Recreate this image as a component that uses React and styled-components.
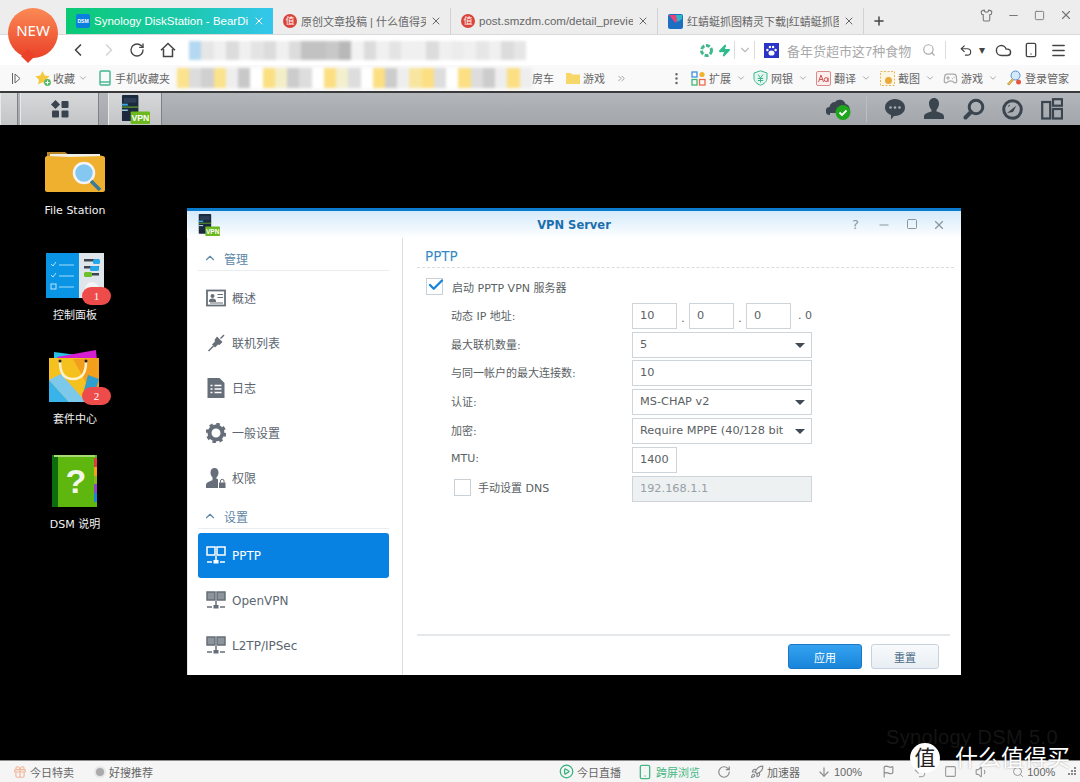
import React from "react";
import styled, { createGlobalStyle } from "styled-components";
import {
  ChevronLeft, ChevronRight, ChevronDown, RotateCw, Search, Undo2, Cloud, Smartphone, Menu, Zap,
  Plus, X, Minus, Square, Shirt, ChevronsRight, Gift, Rocket, ArrowDown, Flag, Volume1,
  Check, PlayCircle, MoreVertical, Gamepad2, ChevronUp,
} from "lucide-react";

const chromeFont = `"Liberation Sans", "Noto Sans CJK SC", sans-serif`;
const dsmFont = `"DejaVu Sans", "Noto Sans CJK SC", sans-serif`;

const Global = createGlobalStyle`
  html, body { margin: 0; padding: 0; background: #000; }
  * { box-sizing: border-box; }
`;

const Page = styled.div`
  position: relative;
  width: 1080px;
  height: 782px;
  overflow: hidden;
  display: flex;
  flex-direction: column;
  font-family: ${chromeFont};
  font-size: 12px;
`;

/* ---- browser chrome ---- */
const TabStrip = styled.div`
  height: 35px;
  flex: none;
  padding: 8px 0 0 66px;
  background: #ededed;
  border-bottom: 1px solid #d9d9d9;
  display: flex;
  align-items: stretch;
  color: #666;
`;
const Tab = styled.div`
  width: ${(p) => p.$w}px;
  display: flex;
  align-items: center;
  gap: 4px;
  padding: 0 8px 0 10px;
  color: ${(p) => (p.$active ? "#fff" : "#666")};
  background: ${(p) => (p.$active ? "linear-gradient(90deg, #0ac974, #1dc9b0 60%, #34c6ee)" : "none")};
  border-right: ${(p) => (p.$active ? "none" : "1px solid #d2d2d2")};
`;
const TabTitle = styled.span`
  flex: 1;
  overflow: hidden;
  white-space: nowrap;
  font-size: ${(p) => p.$fs || 11.5}px;
`;
const DsmFavicon = styled.span`
  width: 14px;
  height: 14px;
  flex: none;
  border-radius: 2px;
  background: #0a7fe0;
  color: #fff;
  font: bold 5px/14px "Liberation Sans", sans-serif;
  text-align: center;
`;
const RedSeal = styled.span`
  width: 14px;
  height: 14px;
  flex: none;
  border-radius: 50%;
  background: #d9433a;
  color: #fff;
  font-size: 9px;
  line-height: 14px;
  text-align: center;
`;
const NewTab = styled.div`
  width: 30px;
  display: flex;
  align-items: center;
  justify-content: center;
  color: #444;
`;
const WinButtons = styled.div`
  margin-left: auto;
  margin-top: -4px;
  height: 22px;
  padding-right: 7px;
  display: flex;
  align-items: center;
  gap: 14px;
  color: #777;
`;
const NewBadge = styled.div`
  position: absolute;
  left: 8px;
  top: 8px;
  width: 50px;
  height: 50px;
  border-radius: 50%;
  background: linear-gradient(180deg, #fb8a55, #ea4128);
  color: #fff;
  font: 15px/44px "Noto Sans", sans-serif;
  text-align: center;
  z-index: 3;
  &::after {
    content: "";
    position: absolute;
    left: 15px;
    bottom: -3px;
    width: 10px;
    height: 10px;
    background: #ea4128;
    transform: rotate(45deg);
    z-index: -1;
  }
`;
const NavRow = styled.div`
  height: 30px;
  flex: none;
  background: #fff;
  display: flex;
  align-items: center;
  padding-left: 64px;
  color: #444;
`;
const Slot = styled.span`
  width: ${(p) => p.$w}px;
  flex: none;
  display: flex;
  align-items: center;
  justify-content: center;
  color: ${(p) => p.$c || "inherit"};
`;
const Sep = styled.span`
  width: 1px;
  height: 18px;
  flex: none;
  background: #dcdcdc;
`;
const BlurStrip = styled.div`
  display: flex;
  flex: none;
  width: ${(p) => p.$w}px;
  height: ${(p) => p.$h}px;
  margin-left: ${(p) => p.$ml}px;
  filter: blur(1.6px);
`;
const BlurCell = styled.span`
  flex: 1;
  background: ${(p) => p.$c};
`;
const BaiduLogo = styled.span`
  width: 15px;
  height: 15px;
  flex: none;
  border: 1px solid #2a35c8;
  background: #2a35c8;
  display: flex;
  align-items: center;
  justify-content: center;
`;
const SearchHint = styled.span`
  width: 128px;
  flex: none;
  margin-left: 8px;
  color: #a8a8a8;
  font-size: 13px;
  white-space: nowrap;
`;
const BookmarkRow = styled.div`
  height: 28px;
  flex: none;
  background: #f9f9f9;
  display: flex;
  align-items: center;
  color: #666;
  white-space: nowrap;
  border-bottom: 2px solid #3a3a3a;
`;
const Mark = styled.span`
  display: flex;
  align-items: center;
  flex: none;
  gap: ${(p) => p.$gap ?? 3}px;
  margin-left: ${(p) => p.$ml || 0}px;
  font-size: 11px;
`;
const TinyChevron = styled(ChevronDown)`
  color: #999;
  margin-left: 2px;
`;

/* ---- DSM taskbar ---- */
const TaskBar = styled.div`
  height: 33px;
  flex: none;
  background: linear-gradient(180deg, #b3b6ba, #a2a5a9);
  display: flex;
  align-items: stretch;
  border-bottom: 1px solid #000;
`;
const TaskStub = styled.div`
  width: ${(p) => p.$w}px;
  margin-left: ${(p) => p.$ml || 0}px;
  flex: none;
  display: flex;
  align-items: center;
  justify-content: center;
  background: linear-gradient(180deg, #d6d8d9, #c2c4c6);
  border-left: 1px solid #e9e9e9;
  border-right: 1px solid #7f8184;
`;
const TaskIcons = styled.div`
  margin-left: auto;
  display: flex;
  align-items: center;
  padding-right: 8px;
`;
const TaskIcon = styled.span`
  width: 39.4px;
  flex: none;
  display: flex;
  justify-content: center;
`;
const TaskSep = styled.span`
  width: 1px;
  height: 26px;
  margin: 0 8px 0 14px;
  background: #93969a;
  border-right: 1px solid #bcbec1;
`;

/* ---- desktop ---- */
const Desktop = styled.main`
  position: relative;
  flex: 1;
  background: #000;
`;
const IconColumn = styled.div`
  width: 150px;
  padding-top: 15px;
  display: flex;
  flex-direction: column;
`;
const DeskItem = styled.div`
  position: relative;
  height: 104.6px;
  display: flex;
  flex-direction: column;
  align-items: center;
  color: #f2f2f2;
  font: 11px/14px ${dsmFont};
`;
const DeskArt = styled.div`
  position: relative;
  height: 52px;
  margin-bottom: 11px;
  display: flex;
  align-items: flex-end;
`;
const Count = styled.span`
  position: absolute;
  right: ${(p) => p.$r}px;
  bottom: ${(p) => p.$b}px;
  width: 29px;
  height: 18px;
  border-radius: 9px;
  background: #ee4b4b;
  color: #fff;
  font: 11px/18px "Liberation Serif", serif;
  text-align: center;
`;
const Ghost = styled.div`
  position: absolute;
  right: 22px;
  bottom: 10px;
  color: #141414;
  font: 20px/26px "Liberation Sans", sans-serif;
  letter-spacing: 0.4px;
`;
const Watermark = styled.div`
  position: absolute;
  right: 10px;
  bottom: 8px;
  display: flex;
  align-items: center;
  gap: 15px;
  color: #fff;
  font-size: 23px;
  line-height: 32px;
  text-shadow: 0 0 2px rgba(0, 0, 0, 0.35);
  z-index: 3;
`;
const WatermarkSeal = styled.span`
  width: 30px;
  height: 30px;
  border-radius: 50%;
  background: #fff;
  color: #222;
  font-size: 21px;
  line-height: 29px;
  text-align: center;
  text-shadow: none;
`;

/* ---- VPN window ---- */
const Win = styled.section`
  position: absolute;
  left: 187px;
  top: 82px;
  width: 774px;
  height: 467px;
  background: #fff;
  border-top: 3px solid #0a7bcd;
  display: flex;
  flex-direction: column;
  font-family: ${dsmFont};
`;
const WinHead = styled.header`
  height: 27px;
  flex: none;
  padding: 0 11px;
  display: grid;
  grid-template-columns: 1fr auto 1fr;
  align-items: center;
  background: linear-gradient(180deg, #d3e9fa, #fff);
`;
const WinTitle = styled.h1`
  margin: 0;
  color: #1c6fae;
  font: bold 11.5px ${dsmFont};
`;
const WinTools = styled.div`
  justify-self: end;
  padding-right: 4px;
  display: flex;
  gap: 14.5px;
  color: #8a96a0;
  font-size: 13px;
  line-height: 14px;
  span {
    width: 14px;
    text-align: center;
  }
`;
const WinBody = styled.div`
  flex: 1;
  display: flex;
  min-height: 0;
`;
const Sidebar = styled.nav`
  width: 216px;
  flex: none;
  padding: 8px 13px 0 10px;
  border-right: 1px solid #dcdfe2;
  border-left: 1px solid #e6e6e6;
`;
const SideHead = styled.div`
  height: 25px;
  margin: ${(p) => (p.$second ? "4px" : "0")} 0 4px;
  padding-left: 5px;
  display: flex;
  align-items: center;
  gap: 7px;
  border-bottom: 1px solid #e9edf0;
  color: #5d87a6;
  font-size: 12px;
`;
const SideItem = styled.div`
  height: 45px;
  padding-left: 8px;
  display: flex;
  align-items: center;
  gap: 6px;
  border-radius: 3px;
  font-size: 12px;
  color: ${(p) => (p.$on ? "#fff" : "#5b6670")};
  background: ${(p) => (p.$on ? "#0782e2" : "none")};
`;
const SideGlyph = styled.svg`
  width: 20px;
  height: 20px;
  flex: none;
  color: ${(p) => (p.$on ? "#fff" : "#666f79")};
`;
const Panel = styled.div`
  flex: 1;
  min-width: 0;
  padding-left: 14px;
  display: flex;
  flex-direction: column;
`;
const PanelTitle = styled.h2`
  height: 30px;
  flex: none;
  margin: 0 7px 4.6px 0;
  padding: 10px 0 0 8px;
  border-bottom: 1px dashed #d9dde0;
  color: #3489c5;
  font: 13.5px/16px ${dsmFont};
`;
const Row = styled.div`
  height: 28.8px;
  flex: none;
  display: flex;
  align-items: center;
  padding-left: ${(p) => p.$pad ?? 34}px;
  color: #5a5f64;
  font-size: 11px;
`;
const RowLabel = styled.label`
  width: ${(p) => p.$w || 181}px;
  flex: none;
  padding-bottom: ${(p) => p.$pb ?? 2}px;
  white-space: nowrap;
`;
const Tick = styled.span`
  position: relative;
  width: 17px;
  height: 17px;
  flex: none;
  margin-right: ${(p) => p.$mr}px;
  margin-bottom: ${(p) => p.$mb || 0}px;
  border: 1px solid #c9d0d6;
  background: #fff;
  svg {
    position: absolute;
    left: 0;
    top: -3px;
    color: #1583dc;
  }
`;
const Field = styled.div`
  position: relative;
  width: ${(p) => p.$w || 180}px;
  height: 26px;
  flex: none;
  padding-left: 7px;
  border: 1px solid #cdd5db;
  background: ${(p) => (p.$off ? "#eef1f1" : "#fff")};
  color: ${(p) => (p.$off ? "#96a0a6" : "#5a5f64")};
  line-height: 24px;
  white-space: nowrap;
  overflow: hidden;
  font-size: 11.3px;
`;
const Caret = styled.span`
  position: absolute;
  right: 6px;
  top: 10px;
  width: 0;
  height: 0;
  border-left: 5px solid transparent;
  border-right: 5px solid transparent;
  border-top: 5px solid #3f4a55;
`;
const Dot = styled.span`
  width: 12px;
  flex: none;
  padding-top: 6px;
  text-align: center;
`;
const LastOctet = styled.span`
  width: 21px;
  flex: none;
  text-align: right;
`;
const WinFoot = styled.footer`
  height: 41px;
  flex: none;
  margin: auto 11px 0 0;
  padding: 8px 11px 0 0;
  display: flex;
  justify-content: flex-end;
  gap: 9px;
  border-top: 2px solid #e5e8ea;
`;
const Btn = styled.button`
  width: ${(p) => p.$w}px;
  height: 25px;
  padding: 0;
  border-radius: 3px;
  font: 11px ${dsmFont};
  border: 1px solid ${(p) => (p.$primary ? "#1b78c6" : "#c6d3de")};
  color: ${(p) => (p.$primary ? "#fff" : "#4d6b84")};
  background: ${(p) =>
    p.$primary ? "linear-gradient(180deg, #35a2f0, #1885db)" : "linear-gradient(180deg, #f8fafc, #e8eef3)"};
`;

/* ---- status bar ---- */
const StatusBar = styled.footer`
  height: 22px;
  flex: none;
  display: flex;
  align-items: center;
  background: #f5f5f5;
  border-top: 1px solid #8c8c8c;
  color: #666;
  white-space: nowrap;
  font-size: 11px;
`;
const StatusItem = styled.span`
  display: flex;
  align-items: center;
  flex: none;
  gap: 3px;
  margin-left: ${(p) => p.$ml || 0}px;
  color: ${(p) => p.$c || "inherit"};
`;
const GreyDot = styled.span`
  width: 8px;
  height: 8px;
  border-radius: 50%;
  background: #aaa;
  box-shadow: 0 0 0 2px #e6e6e6;
  margin-right: 2px;
`;

const HomeIcon = () => (
  <svg width="16" height="16" viewBox="0 0 16 16" fill="none" stroke="#444" strokeWidth="1.5">
    <path d="M1 8.2 8 1.5l7 6.7M3.5 7v7.5h9V7" />
  </svg>
);

const PanelToggle = () => (
  <svg width="9" height="11" viewBox="0 0 9 11" fill="none" stroke="#666">
    <path d="M.5 0v11M3 1l5 4.5-5 4.5z" />
  </svg>
);

const PawIcon = () => (
  <svg width="13" height="13" viewBox="0 0 13 13" fill="#fff">
    <ellipse cx="6.5" cy="9" rx="3" ry="2.6" />
    <circle cx="2.4" cy="6" r="1.2" />
    <circle cx="10.6" cy="6" r="1.2" />
    <circle cx="4.9" cy="3" r="1.2" />
    <circle cx="8.1" cy="3" r="1.2" />
  </svg>
);

const SwirlIcon = () => (
  <svg width="15" height="15" viewBox="0 0 15 15" fill="none" stroke="#3fb88a" strokeWidth="3" strokeDasharray="4 1.6">
    <circle cx="7.5" cy="7.5" r="5" />
  </svg>
);

const KiteIcon = () => (
  <svg width="15" height="15" viewBox="0 0 15 15">
    <rect width="15" height="15" rx="2" fill="#1d6fc2" />
    <path d="M1 1h13L7.5 9z" fill="#e8417a" />
    <path d="M8 1h6v4L9.5 8z" fill="#2bb8c9" />
  </svg>
);

const StarIcon = () => (
  <svg width="17" height="17" viewBox="0 0 17 17">
    <path d="M7.5 1 9.7 5.6l4.9.7-3.5 3.4.8 4.9-4.4-2.3-4.4 2.3.8-4.9L.4 6.3l4.9-.7z" fill="#f5c93f" />
    <circle cx="12.5" cy="12.5" r="3.4" fill="#52b96b" />
    <path d="M12.5 10.5v4M10.5 12.5h4" stroke="#fff" />
  </svg>
);

const PhoneMark = () => (
  <svg width="12" height="16" viewBox="0 0 12 16" fill="none" stroke="#3fb68f" strokeWidth="1.4">
    <rect x="1" y="1" width="10" height="14" rx="1" />
    <path d="M1 12h10" />
  </svg>
);

const FolderMark = () => (
  <svg width="14" height="12" viewBox="0 0 14 12">
    <path d="M0 1h5l1 1.5h8V12H0z" fill="#f7d768" />
  </svg>
);

const ExtendMark = () => (
  <svg width="15" height="15" viewBox="0 0 15 15" fill="none" strokeWidth="1.3">
    <rect x="1" y="1" width="5" height="5" stroke="#3d8fe0" />
    <rect x="1" y="8.5" width="5" height="5.5" stroke="#3fb873" />
    <rect x="8.5" y="8.5" width="5.5" height="5.5" stroke="#ee6a4a" />
    <circle cx="11" cy="3.5" r="2.6" fill="#f1b32e" />
  </svg>
);

const ShieldMark = () => (
  <svg width="15" height="16" viewBox="0 0 15 16">
    <path d="M7.5.8 14 3v5c0 3.6-3 6-6.5 7.2C4 14 1 11.6 1 8V3z" fill="#e5f6ef" stroke="#3bb58e" />
    <path d="M5 4.5 7.5 8 10 4.5M4.8 8.5h5.4M4.8 10.5h5.4M7.5 8v4.5" stroke="#3bb58e" fill="none" />
  </svg>
);

const AaMark = () => (
  <svg width="15" height="15" viewBox="0 0 15 15">
    <rect x=".5" y=".5" width="14" height="14" rx="1.5" fill="#fdeeee" stroke="#d98a8a" />
    <path d="M2.5 11 5 4l2.5 7M3.5 8.5h3M12 6.5V11M12 8.6a1.9 1.9 0 1 1-3.8 0 1.9 1.9 0 0 1 3.8 0z" stroke="#d0534f" fill="none" />
  </svg>
);

const CropMark = () => (
  <svg width="15" height="15" viewBox="0 0 15 15">
    <rect x=".5" y=".5" width="14" height="14" fill="#fdf6e3" stroke="#e0b95a" strokeDasharray="2 1.5" />
    <circle cx="8.5" cy="9.5" r="3.5" fill="#e9a93c" />
  </svg>
);

const LoginMark = () => (
  <svg width="16" height="16" viewBox="0 0 16 16">
    <circle cx="9.5" cy="5.5" r="4.5" fill="#d6e9fa" stroke="#4a92d8" />
    <path d="M6.5 8.5 1.5 14l1.5 1 4.5-5" fill="#e7c26a" stroke="#c99a3a" />
    <circle cx="12.5" cy="12" r="2.5" fill="#e4573d" />
  </svg>
);

const StatusGrip = () => (
  <svg width="9" height="9" viewBox="0 0 9 9" fill="#888">
    <rect x="6" y="0" width="2" height="2" />
    <rect x="3" y="3" width="2" height="2" />
    <rect x="6" y="3" width="2" height="2" />
    <rect x="0" y="6" width="2" height="2" />
    <rect x="3" y="6" width="2" height="2" />
    <rect x="6" y="6" width="2" height="2" />
  </svg>
);

const DashIcon = () => (
  <svg width="20" height="20" viewBox="0 0 20 20" fill="#3a444e">
    <path d="M5.5 1 10 5.5 5.5 10 1 5.5z" />
    <rect x="11.5" y="2" width="7" height="7" rx="1" />
    <rect x="2" y="11.5" width="7" height="7" rx="1" />
    <rect x="11.5" y="11.5" width="7" height="7" rx="1" />
  </svg>
);

const VpnIcon = ({ size = 30 }) => (
  <svg width={size} height={size} viewBox="0 0 30 30">
    <rect x="1" y="0" width="17" height="27" rx="1" fill="#1b2a3d" />
    <rect x="3" y="3" width="13" height="5" fill="#2c3e55" />
    <rect x="1" y="9" width="6" height="2" fill="#38a8e6" />
    <rect x="1" y="12" width="17" height="1" fill="#6fbf2a" />
    <rect x="1" y="15" width="6" height="1.5" fill="#9fd0ef" />
    <rect x="10" y="17" width="20" height="13" rx="1" fill="#6cb81f" />
    <text x="20" y="27" textAnchor="middle" fontSize="9" fontWeight="bold" fontFamily="Liberation Sans" fill="#fff">VPN</text>
  </svg>
);

const ChatIcon = () => (
  <svg width="22" height="22" viewBox="0 0 22 22" fill="#3b454f">
    <path d="M11 1c5.5 0 10 3.6 10 8.5S16.5 18 11 18h-1l-3 3.5V17C3.5 15.8 1 13 1 9.5 1 4.6 5.5 1 11 1z" />
    <circle cx="6.5" cy="9.5" r="1.3" fill="#a9acb0" />
    <circle cx="11" cy="9.5" r="1.3" fill="#a9acb0" />
    <circle cx="15.5" cy="9.5" r="1.3" fill="#a9acb0" />
  </svg>
);

const PersonIcon = () => (
  <svg width="22" height="22" viewBox="0 0 22 22" fill="#3b454f">
    <path d="M11 0c3 0 5 2.4 5 5.5 0 2.5-1 5-2.500 6.200v1.800c3 .8 7.500 2 7.500 5V21H1v-2.500c0-3 4.500-4.200 7.500-5v-1.800C7 10.500 6 8 6 5.500 6 2.400 8 0 11 0z" />
  </svg>
);

const LensIcon = () => (
  <svg width="22" height="22" viewBox="0 0 22 22" fill="none" stroke="#3b454f">
    <circle cx="13" cy="9" r="6.8" strokeWidth="3" />
    <path d="M8 14 2.5 19.5" strokeWidth="4" strokeLinecap="round" />
  </svg>
);

const GaugeIcon = () => (
  <svg width="21" height="21" viewBox="0 0 21 21" fill="none">
    <circle cx="10.5" cy="10.5" r="8.8" stroke="#3b454f" strokeWidth="3" />
    <path d="M5 14 14.5 6.5 11 13z" fill="#3b454f" />
    <path d="M6 7.5 8 6" stroke="#3b454f" />
  </svg>
);

const LayoutIcon = () => (
  <svg width="22" height="22" viewBox="0 0 22 22" fill="none" stroke="#3b454f" strokeWidth="2.2">
    <rect x="1.2" y="4" width="8" height="16.5" />
    <rect x="12" y="1.2" width="9" height="6.5" />
    <rect x="12" y="11" width="9" height="9.5" />
  </svg>
);

const CloudOk = () => (
  <svg width="26" height="24" viewBox="0 0 26 24">
    <path d="M4 18a4 4 0 0 1-.5-8A5.5 5.5 0 0 1 9 5a6 6 0 0 1 10.5 2 5 5 0 0 1 2 9H4z" fill="#3b454f" />
    <circle cx="17" cy="15.5" r="7.5" fill="#1fa61f" />
    <path d="M13.5 15.5l2.5 2.5 4.5-4.5" stroke="#fff" strokeWidth="1.8" fill="none" />
  </svg>
);

const FolderArt = () => (
  <svg width="60" height="46" viewBox="0 0 60 46">
    <path d="M2 5h18l5 3.5h32v6H2z" fill="#b98424" />
    <rect x="5" y="7" width="50" height="6" fill="#f0efe6" />
    <path d="M0 11c0-1 1-2 2-2l23 1 33-1c1 0 2 1 2 2v32c0 1-1 2-2 2H2c-1 0-2-1-2-2z" fill="#efb02f" />
    <circle cx="39" cy="26" r="10" fill="#84c8f2" stroke="#f4f4f4" strokeWidth="2.5" />
    <path d="M46 34l9 9" stroke="#3b7a99" strokeWidth="3.5" />
  </svg>
);

const PanelArt = () => (
  <svg width="58" height="45" viewBox="0 0 58 45">
    <rect width="33" height="45" fill="#0a94e6" />
    <rect x="33" width="25" height="45" fill="#dfe5ea" />
    <path d="M5 11l2 2 3-4M5 22l2 2 3-4" stroke="#b8e4fa" fill="none" />
    <rect x="5" y="31" width="5" height="5" stroke="#b8e4fa" fill="none" />
    <path d="M13 12h15M13 23h15M13 34h15" stroke="#6fc4f2" strokeWidth="1.5" />
    <rect x="38" y="6" width="15" height="2.5" fill="#3c4650" />
    <rect x="47" y="6" width="7" height="5" rx="1.5" fill="#27a7e8" />
    <rect x="38" y="13" width="15" height="2.5" fill="#3c4650" />
    <rect x="44" y="13" width="9" height="5" rx="1.5" fill="#27a7e8" />
    <rect x="38" y="20" width="15" height="2.5" fill="#3c4650" />
    <rect x="38" y="19" width="8" height="5" rx="1.5" fill="#6cc12a" />
    <circle cx="46" cy="36" r="7" fill="#f3f4f5" />
  </svg>
);

const BagArt = () => (
  <svg width="56" height="53" viewBox="0 0 56 53">
    <path d="M7 3 30 6 7 12z" fill="#25c3e8" />
    <path d="M10 8 49 1l1 11H12z" fill="#d51fd0" />
    <path d="M2 9h50v44H2z" fill="#f5c11f" />
    <path d="M2 31 22 53H2z" fill="#38b4ea" />
    <path d="M22 53 2 31l12-6 25 28z" fill="#7cc9ec" />
    <path d="M26 10l20 36 6-3V9z" fill="#f29f1d" />
    <path d="M13 13c0 12 5 17 13 17s13-5 13-17" fill="none" stroke="#fff2cc" strokeWidth="2.5" />
    <circle cx="13" cy="12" r="1.5" fill="#222" />
    <circle cx="39" cy="12" r="1.5" fill="#222" />
    <path d="M41 26l11 4-6 19-10-4z" fill="#2f9fcf" />
  </svg>
);

const BookArt = () => (
  <svg width="46" height="52" viewBox="0 0 46 52">
    <rect width="45" height="52" fill="#5eb60e" />
    <rect width="6" height="52" fill="#0d6b10" />
    <rect x="2" y="0" width="41" height="2" fill="#a7d977" />
    <rect x="42" y="3" width="3" height="9" fill="#e23b3b" />
    <rect x="42" y="12" width="3" height="9" fill="#f2a31c" />
    <rect x="42" y="21" width="3" height="8" fill="#86b81b" />
    <rect x="42" y="29" width="3" height="9" fill="#9046c4" />
    <rect x="42" y="38" width="3" height="9" fill="#1d86d8" />
    <text x="24" y="38" textAnchor="middle" fontSize="34" fontWeight="bold" fontFamily="Liberation Sans" fill="#f2f7ea">?</text>
  </svg>
);

const CardGlyph = () => (
  <SideGlyph viewBox="0 0 20 20">
    <rect x="1" y="2.5" width="18" height="15" fill="none" stroke="currentColor" strokeWidth="1.8" />
    <circle cx="6.5" cy="8" r="2" fill="currentColor" />
    <path d="M3.5 13.5c0-2 1.5-2.5 3-2.5s3 .5 3 2.5zM11.5 6.5h5.5M11.5 9.5h5.5M4 15h13" fill="currentColor" stroke="currentColor" strokeWidth="1.2" />
  </SideGlyph>
);

const PlugGlyph = () => (
  <SideGlyph viewBox="0 0 20 20" fill="currentColor">
    <path d="M11 3.5l5.5 5.5-3 3-1.5-.5-3 3-3-3 3-3-.5-1.500z" />
    <path d="M7 12.5 2 17.5l1 1 5-5zM14 5l3.5-3.5 1 1L15 6z" />
  </SideGlyph>
);

const DocGlyph = () => (
  <SideGlyph viewBox="0 0 20 20">
    <path d="M1.5 0h12l5 5v15h-17z" fill="currentColor" />
    <path d="M4.5 7.5h2M8.5 7.5h7M4.5 11h2M8.5 11h7M4.5 14.5h2M8.5 14.5h7" stroke="#fff" strokeWidth="1.5" />
  </SideGlyph>
);

const GearGlyph = () => (
  <SideGlyph viewBox="0 0 20 20">
    <circle cx="10" cy="10" r="6.5" fill="none" stroke="currentColor" strokeWidth="4" />
    <circle cx="10" cy="10" r="9" fill="none" stroke="currentColor" strokeWidth="2.5" strokeDasharray="3.5 3.57" />
  </SideGlyph>
);

const UserLockGlyph = () => (
  <SideGlyph viewBox="0 0 20 20" fill="currentColor">
    <path d="M8.5 0c2.5 0 4 2 4 4.5 0 2-.8 3.8-2 4.8v1.5c1 .3 1.5.5 1.5.5v8.700H0v-3c0-2.500 4-3.800 6.500-4.700V9.300c-1.200-1-2-2.800-2-4.800C4.500 2 6 0 8.500 0z" />
    <rect x="13" y="14.5" width="6.5" height="5.5" />
    <path d="M14.5 14.5V13a1.75 1.75 0 0 1 3.5 0v1.5" fill="none" stroke="currentColor" />
  </SideGlyph>
);

const NetGlyph = ({ on }) => (
  <SideGlyph $on={on} viewBox="0 0 20 20" fill="none" stroke="currentColor">
    <rect x="1" y="1" width="8" height="8" strokeWidth="1.5" fill={on ? "none" : "#8d949b"} />
    <rect x="11" y="1" width="8" height="8" strokeWidth="1.5" fill={on ? "none" : "#8d949b"} />
    <path d="M10 10v5M1 16h5M14 16h5" strokeWidth="1.5" />
    <rect x="7.5" y="14" width="5" height="3.5" fill="currentColor" stroke="none" />
  </SideGlyph>
);

const gray = "#dcdcdc";
const pale = "#f0f0f0";
const urlCells = ["#b4d8f2", "#e6e6e6", pale, gray, pale, "#e4e4e4", gray, pale, gray, "#c2c2c2", "#c2c2c2", "#c8c8c8", "#b8b8b8", "#f2f2f2", gray, pale, "#e4e4e4", pale, pale, gray, pale, "#ececec", pale, "#e6e6e6", pale, gray, "#e6e6e6"];
const markCells = ["#fbe28c", gray, "#d0d0d0", "#fbe28c", "#eee", "#c8c8c8", "#fff", "#fbdf82", "#f4eec8", "#ccc", "#ddd", "#fff", "#fbdf82", "#f3efcf", "#ddd", "#fff", "#fbdf82", "#ccc", "#eee", "#f8e6a0", "#fbdf82", "#ddd", "#fff", "#fbdf82", "#ddd", "#ccc", "#eee", "#fbdf82", "#eee"];

export default function App() {
  return (
    <Page>
      <Global />
      <NewBadge>NEW</NewBadge>
      <TabStrip>
        <Tab $w={207} $active>
          <DsmFavicon>DSM</DsmFavicon>
          <TabTitle>Synology DiskStation - BearDi</TabTitle>
          <X size={12} />
        </Tab>
        <Tab $w={178}>
          <RedSeal>值</RedSeal>
          <TabTitle $fs={11}>原创文章投稿 | 什么值得买</TabTitle>
          <X size={12} />
        </Tab>
        <Tab $w={207}>
          <RedSeal>值</RedSeal>
          <TabTitle>post.smzdm.com/detail_previe</TabTitle>
          <X size={12} />
        </Tab>
        <Tab $w={206}>
          <KiteIcon />
          <TabTitle $fs={11}>红蜻蜓抓图精灵下载|红蜻蜓抓图</TabTitle>
          <X size={12} />
        </Tab>
        <NewTab>
          <Plus size={14} strokeWidth={2.5} />
        </NewTab>
        <WinButtons>
          <Shirt size={13} />
          <Minus size={13} />
          <Square size={11} />
          <X size={14} />
        </WinButtons>
      </TabStrip>

      <NavRow>
        <Slot $w={28}><ChevronLeft size={20} /></Slot>
        <Slot $w={3} />
        <Slot $w={28} $c="#d5d5d5"><ChevronRight size={20} /></Slot>
        <Slot $w={28}><RotateCw size={16} /></Slot>
        <Slot $w={3} />
        <Slot $w={28}><HomeIcon /></Slot>
        <BlurStrip $w={337} $h={19} $ml={7}>
          {urlCells.map((c, i) => <BlurCell key={i} $c={c} />)}
        </BlurStrip>
        <Slot $w={172} />
        <Slot $w={16}><SwirlIcon /></Slot>
        <Slot $w={20} $c="#2dbb8b"><Zap size={13} fill="#2dbb8b" /></Slot>
        <Sep />
        <Slot $w={19} $c="#bbb"><ChevronDown size={14} /></Slot>
        <Sep />
        <Slot $w={9} />
        <BaiduLogo><PawIcon /></BaiduLogo>
        <SearchHint>备年货超市这7种食物</SearchHint>
        <Slot $w={28} $c="#aaa"><Search size={14} /></Slot>
        <Slot $w={2} />
        <Sep />
        <Slot $w={13} />
        <Slot $w={14}><Undo2 size={15} /></Slot>
        <Slot $w={18}>▾</Slot>
        <Slot $w={24}><Cloud size={17} /></Slot>
        <Slot $w={32}><Smartphone size={16} /></Slot>
        <Slot $w={22}><Menu size={17} /></Slot>
      </NavRow>

      <BookmarkRow>
        <Slot $w={12} />
        <Slot $w={9}><PanelToggle /></Slot>
        <Mark $ml={14} $gap={1}><StarIcon />收藏<TinyChevron size={10} /></Mark>
        <Mark $ml={11} $gap={4}><PhoneMark />手机收藏夹</Mark>
        <BlurStrip $w={355} $h={20} $ml={7}>
          {markCells.map((c, i) => <BlurCell key={i} $c={c} />)}
        </BlurStrip>
        <Mark>房车</Mark>
        <Mark $ml={12}><FolderMark />游戏</Mark>
        <Slot $w={32} $c="#999"><ChevronsRight size={11} /></Slot>
        <Slot $w={25} />
        <Slot $w={29} $c="#666"><MoreVertical size={15} /></Slot>
        <Mark><ExtendMark />扩展<TinyChevron size={10} /></Mark>
        <Mark $ml={7}><ShieldMark />网银<TinyChevron size={10} /></Mark>
        <Mark $ml={8}><AaMark />翻译<TinyChevron size={10} /></Mark>
        <Mark $ml={9}><CropMark />截图<TinyChevron size={10} /></Mark>
        <Mark $ml={8}><Gamepad2 size={15} color="#aaa" />游戏<TinyChevron size={10} /></Mark>
        <Mark $ml={8}><LoginMark />登录管家</Mark>
      </BookmarkRow>

      <TaskBar>
        <TaskStub $w={18} />
        <TaskStub $w={79} $ml={2}><DashIcon /></TaskStub>
        <TaskStub $w={54} $ml={9}><VpnIcon size={29} /></TaskStub>
        <TaskIcons>
          <CloudOk />
          <TaskSep />
          <TaskIcon><ChatIcon /></TaskIcon>
          <TaskIcon><PersonIcon /></TaskIcon>
          <TaskIcon><LensIcon /></TaskIcon>
          <TaskIcon><GaugeIcon /></TaskIcon>
          <TaskIcon><LayoutIcon /></TaskIcon>
        </TaskIcons>
      </TaskBar>

      <Desktop>
        <IconColumn>
          <DeskItem><DeskArt><FolderArt /></DeskArt>File Station</DeskItem>
          <DeskItem><DeskArt><PanelArt /><Count $r={-7} $b={-7}>1</Count></DeskArt>控制面板</DeskItem>
          <DeskItem><DeskArt><BagArt /><Count $r={-8} $b={-3}>2</Count></DeskArt>套件中心</DeskItem>
          <DeskItem><DeskArt><BookArt /></DeskArt>DSM 说明</DeskItem>
        </IconColumn>

        <Win>
          <WinHead>
            <VpnIcon size={22} />
            <WinTitle>VPN Server</WinTitle>
            <WinTools>
              <span>?</span>
              <Minus size={14} />
              <Square size={12} />
              <X size={14} />
            </WinTools>
          </WinHead>
          <WinBody>
            <Sidebar>
              <SideHead><ChevronUp size={14} />管理</SideHead>
              <SideItem><CardGlyph />概述</SideItem>
              <SideItem><PlugGlyph />联机列表</SideItem>
              <SideItem><DocGlyph />日志</SideItem>
              <SideItem><GearGlyph />一般设置</SideItem>
              <SideItem><UserLockGlyph />权限</SideItem>
              <SideHead $second><ChevronUp size={14} />设置</SideHead>
              <SideItem $on><NetGlyph on />PPTP</SideItem>
              <SideItem><NetGlyph />OpenVPN</SideItem>
              <SideItem><NetGlyph />L2TP/IPSec</SideItem>
            </Sidebar>
            <Panel>
              <PanelTitle>PPTP</PanelTitle>
              <Row $pad={9}>
                <Tick $mr={9}><Check size={18} strokeWidth={3} /></Tick>
                启动 PPTP VPN 服务器
              </Row>
              <Row>
                <RowLabel>动态 IP 地址:</RowLabel>
                <Field $w={45}>10</Field><Dot>.</Dot>
                <Field $w={45}>0</Field><Dot>.</Dot>
                <Field $w={45}>0</Field><LastOctet>. 0</LastOctet>
              </Row>
              <Row>
                <RowLabel>最大联机数量:</RowLabel>
                <Field>5<Caret /></Field>
              </Row>
              <Row>
                <RowLabel>与同一帐户的最大连接数:</RowLabel>
                <Field>10</Field>
              </Row>
              <Row>
                <RowLabel>认证:</RowLabel>
                <Field>MS-CHAP v2<Caret /></Field>
              </Row>
              <Row>
                <RowLabel>加密:</RowLabel>
                <Field>Require MPPE (40/128 bit<Caret /></Field>
              </Row>
              <Row>
                <RowLabel>MTU:</RowLabel>
                <Field $w={45}>1400</Field>
              </Row>
              <Row $pad={37}>
                <Tick $mr={7} $mb={2} />
                <RowLabel $w={154} $pb={4}>手动设置 DNS</RowLabel>
                <Field $off>192.168.1.1</Field>
              </Row>
              <WinFoot>
                <Btn $primary $w={74}>应用</Btn>
                <Btn $w={68}>重置</Btn>
              </WinFoot>
            </Panel>
          </WinBody>
        </Win>
        <Ghost>Synology DSM 5.0</Ghost>
      </Desktop>

      <Watermark>
        <WatermarkSeal>值</WatermarkSeal>
        什么值得买
      </Watermark>

      <StatusBar>
        <StatusItem $ml={13}><Gift size={14} color="#f0b79a" />今日特卖</StatusItem>
        <StatusItem $ml={22}><GreyDot />好搜推荐</StatusItem>
        <StatusItem $ml={406}><PlayCircle size={15} color="#35b27d" />今日直播</StatusItem>
        <StatusItem $ml={16} $c="#45b985"><Smartphone size={16} />跨屏浏览</StatusItem>
        <StatusItem $ml={17}><RotateCw size={14} color="#888" /></StatusItem>
        <StatusItem $ml={19}><Rocket size={14} color="#888" />加速器</StatusItem>
        <StatusItem $ml={17}><ArrowDown size={14} color="#888" />100%</StatusItem>
        <StatusItem $ml={20}><Flag size={13} color="#888" /></StatusItem>
        <StatusItem $ml={18}><Undo2 size={14} color="#aaa" /></StatusItem>
        <StatusItem $ml={17}><Square size={13} color="#999" /></StatusItem>
        <StatusItem $ml={18}><Volume1 size={14} color="#999" /></StatusItem>
        <StatusItem $ml={23}><Search size={12} color="#999" />100%</StatusItem>
        <StatusItem $ml={13}><StatusGrip /></StatusItem>
      </StatusBar>
    </Page>
  );
}
